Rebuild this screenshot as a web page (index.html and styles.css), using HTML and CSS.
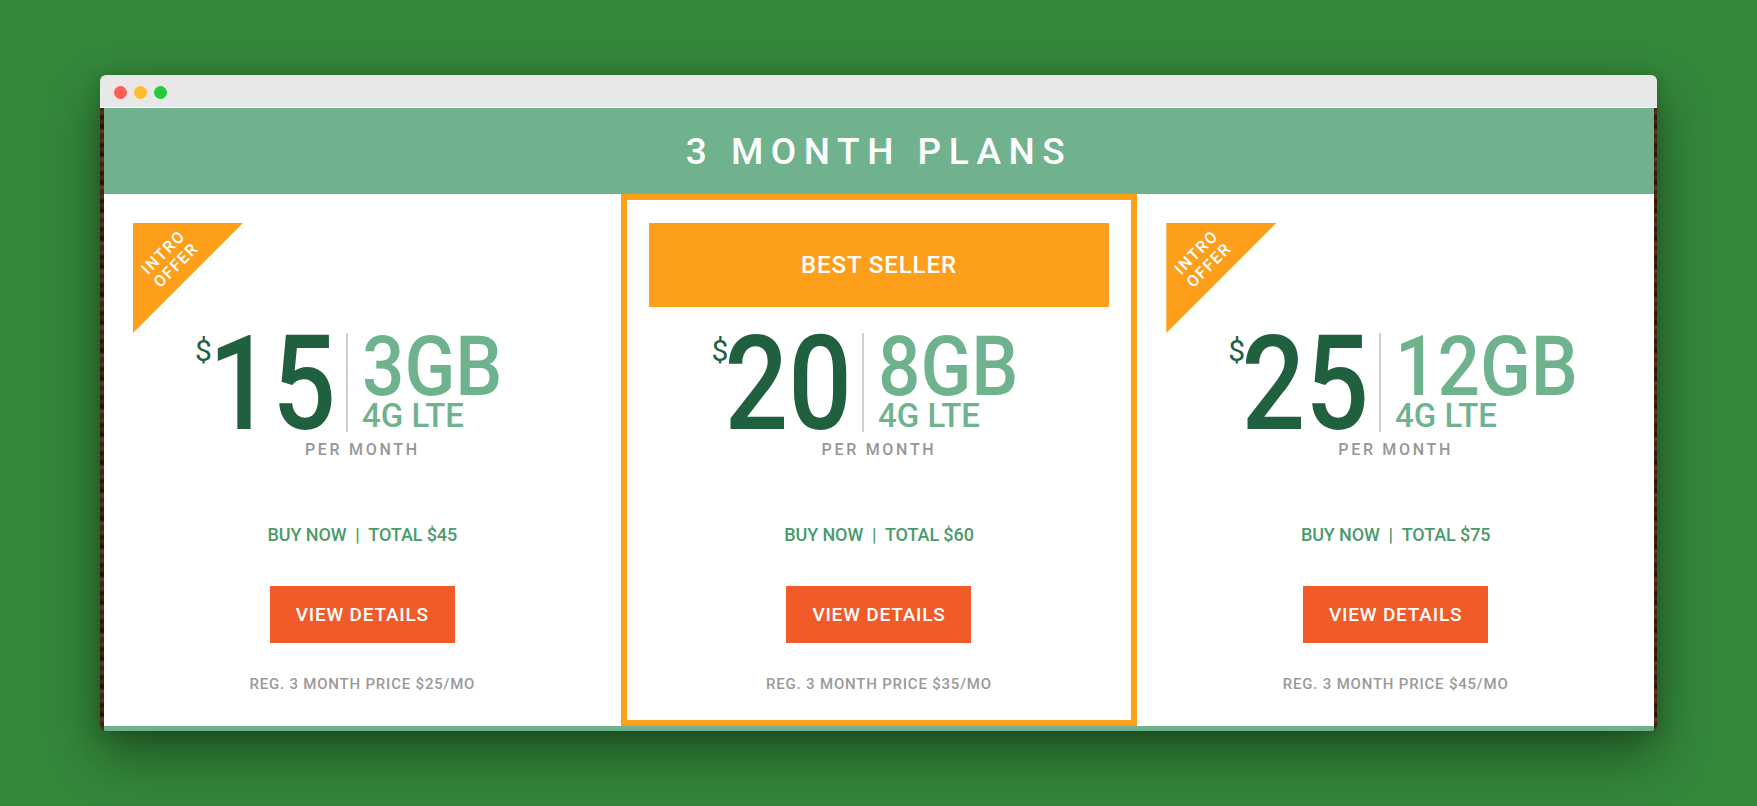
FILE: index.html
```html
<!DOCTYPE html>
<html lang="en">
<head>
<meta charset="utf-8">
<title>3 Month Plans</title>
<link rel="stylesheet" href="styles.css">
</head>
<body>
<div class="window">
  <div class="titlebar">
    <span class="dot dot--red"></span>
    <span class="dot dot--yellow"></span>
    <span class="dot dot--green"></span>
  </div>
  <div class="frame">
    <div class="viewport">
      <div class="page">
        <header class="plans-header"><h1>3 MONTH PLANS</h1></header>
        <div class="plans">
          <section class="plan">
            <div class="ribbon"><span>INTRO<br>OFFER</span></div>
            <div class="plan-top"></div>
            <div class="price">
              <div class="price-amount"><span class="cur">$</span><span class="num">15</span></div>
              <div class="price-divider"></div>
              <div class="price-data"><div class="gb">3GB</div><div class="lte">4G LTE</div></div>
            </div>
            <div class="per">PER MONTH</div>
            <div class="plan-bottom">
              <div class="buy">BUY NOW&nbsp;&nbsp;|&nbsp;&nbsp;TOTAL $45</div>
              <a class="btn" href="#">VIEW DETAILS</a>
              <div class="reg">REG. 3 MONTH PRICE $25/MO</div>
            </div>
          </section>
          <section class="plan plan--featured">
            <div class="plan-top"><div class="banner">BEST SELLER</div></div>
            <div class="price">
              <div class="price-amount"><span class="cur">$</span><span class="num">20</span></div>
              <div class="price-divider"></div>
              <div class="price-data"><div class="gb">8GB</div><div class="lte">4G LTE</div></div>
            </div>
            <div class="per">PER MONTH</div>
            <div class="plan-bottom">
              <div class="buy">BUY NOW&nbsp;&nbsp;|&nbsp;&nbsp;TOTAL $60</div>
              <a class="btn" href="#">VIEW DETAILS</a>
              <div class="reg">REG. 3 MONTH PRICE $35/MO</div>
            </div>
          </section>
          <section class="plan">
            <div class="ribbon"><span>INTRO<br>OFFER</span></div>
            <div class="plan-top"></div>
            <div class="price">
              <div class="price-amount"><span class="cur">$</span><span class="num">25</span></div>
              <div class="price-divider"></div>
              <div class="price-data"><div class="gb">12GB</div><div class="lte">4G LTE</div></div>
            </div>
            <div class="per">PER MONTH</div>
            <div class="plan-bottom">
              <div class="buy">BUY NOW&nbsp;&nbsp;|&nbsp;&nbsp;TOTAL $75</div>
              <a class="btn" href="#">VIEW DETAILS</a>
              <div class="reg">REG. 3 MONTH PRICE $45/MO</div>
            </div>
          </section>
        </div>
      </div>
    </div>
  </div>
</div>
</body>
</html>
```
FILE: styles.css
```css
* { box-sizing: border-box; }

html, body { height: 100%; }

body {
  margin: 0;
  padding: 75px 0 0 100px;
  background: #34883a;
  font-family: Roboto, "Liberation Sans", sans-serif;
  overflow: hidden;
}

.window {
  width: 1557px;
  height: 656px;
  border-radius: 6px;
  overflow: hidden;
  box-shadow: 0 24px 55px rgba(0, 0, 0, 0.42), 0 2px 18px rgba(0, 0, 0, 0.18);
  display: flex;
  flex-direction: column;
}

.titlebar {
  height: 33px;
  flex: none;
  background: #e8e8e8;
  border-bottom: 1px solid #ffffff;
  display: flex;
  align-items: center;
  gap: 7px;
  padding: 3px 0 0 13.5px;
}

.dot {
  width: 13px;
  height: 13px;
  border-radius: 50%;
}
.dot--red { background: #fe5f58; }
.dot--yellow { background: #febc2e; }
.dot--green { background: #28c841; }

.frame {
  flex: 1;
  padding: 0 3px 0 4px;
  background: repeating-linear-gradient(180deg, #3d1e0c 0, #5b3119 5px, #2a1207 9px, #4b2612 14px, #1e0c04 19px, #6a3a1d 23px, #3d1e0c 28px);
  display: flex;
}

.viewport {
  width: 1550px;
  overflow: hidden;
  background: #6fb28e;
}

.page {
  width: 1550px;
  background: #ffffff;
}

.plans-header {
  height: 86px;
  background: #70b28e;
  display: flex;
  align-items: center;
  justify-content: center;
}

.plans-header h1 {
  margin: 0;
  color: #ffffff;
  font-size: 37px;
  font-weight: 500;
  letter-spacing: 7.5px;
  line-height: 1;
}

.plans {
  display: grid;
  grid-template-columns: 1fr 1fr 1fr;
  height: 532px;
}

.plan {
  position: relative;
  display: flex;
  flex-direction: column;
  align-items: center;
  padding-top: 29px;
}

.plan--featured {
  border: 6px solid #fe9f1c;
  padding-top: 23px;
}

.plan-top {
  height: 84px;
  align-self: stretch;
  display: flex;
  justify-content: center;
}

.plan--featured .plan-top { padding: 0 22px; }

.banner {
  flex: 1;
  background: #fe9f1c;
  color: #ffffff;
  font-size: 24px;
  font-weight: 500;
  letter-spacing: 0.9px;
  display: flex;
  align-items: center;
  justify-content: center;
}

.ribbon {
  position: absolute;
  left: 29px;
  top: 29px;
  width: 110px;
  height: 110px;
  background: #fe9f1c;
  clip-path: polygon(0 0, 100% 0, 0 100%);
}

.ribbon span {
  position: absolute;
  left: 37px;
  top: 36px;
  transform: translate(-50%, -50%) rotate(-45deg);
  color: #ffffff;
  font-size: 16px;
  font-weight: 500;
  line-height: 18px;
  letter-spacing: 1.6px;
  text-align: center;
  white-space: nowrap;
}

.price {
  align-self: stretch;
  margin-top: 26px;
  height: 97px;
  display: grid;
  grid-template-columns: 1fr 2px 1fr;
  padding-right: 31px;
}

.price-amount {
  display: flex;
  justify-content: flex-end;
  align-items: flex-start;
  padding-right: 10px;
  color: #20603f;
}

.cur {
  font-size: 30px;
  line-height: 30px;
  margin-top: 3px;
}

.num {
  font-size: 132px;
  font-weight: 500;
  line-height: 0.716;
  margin-top: 4px;
  margin-left: -26px;
  transform: scaleX(0.85);
  transform-origin: right center;
}

.price-divider {
  background: #cfcfcf;
}

.price-data {
  display: flex;
  flex-direction: column;
  align-items: flex-start;
  color: #6fb38e;
  padding: 4px 0 0 14px;
  font-weight: 500;
}

.gb {
  font-size: 83px;
  line-height: 59px;
  transform: scaleX(0.9);
  transform-origin: left center;
}

.lte {
  margin-top: 7px;
  font-size: 34px;
  line-height: 24px;
  transform: scaleX(0.97);
  transform-origin: left center;
}

.per {
  margin-top: 12px;
  font-size: 16px;
  line-height: 16px;
  letter-spacing: 2.7px;
  font-weight: 500;
  color: #979797;
}

.plan-bottom {
  display: flex;
  flex-direction: column;
  align-items: center;
  align-self: stretch;
}

.buy {
  margin-top: 68px;
  font-size: 18px;
  line-height: 18px;
  font-weight: 500;
  letter-spacing: -0.1px;
  color: #4a9b6c;
  white-space: nowrap;
}

.btn {
  margin-top: 42px;
  width: 185px;
  height: 57px;
  background: #f05b29;
  color: #ffffff;
  text-decoration: none;
  font-size: 19px;
  font-weight: 500;
  letter-spacing: 0.8px;
  display: flex;
  align-items: center;
  justify-content: center;
}

.reg {
  margin-top: 34px;
  font-size: 15px;
  line-height: 15px;
  font-weight: 500;
  letter-spacing: 0.8px;
  color: #9a9a9a;
  white-space: nowrap;
}
```
